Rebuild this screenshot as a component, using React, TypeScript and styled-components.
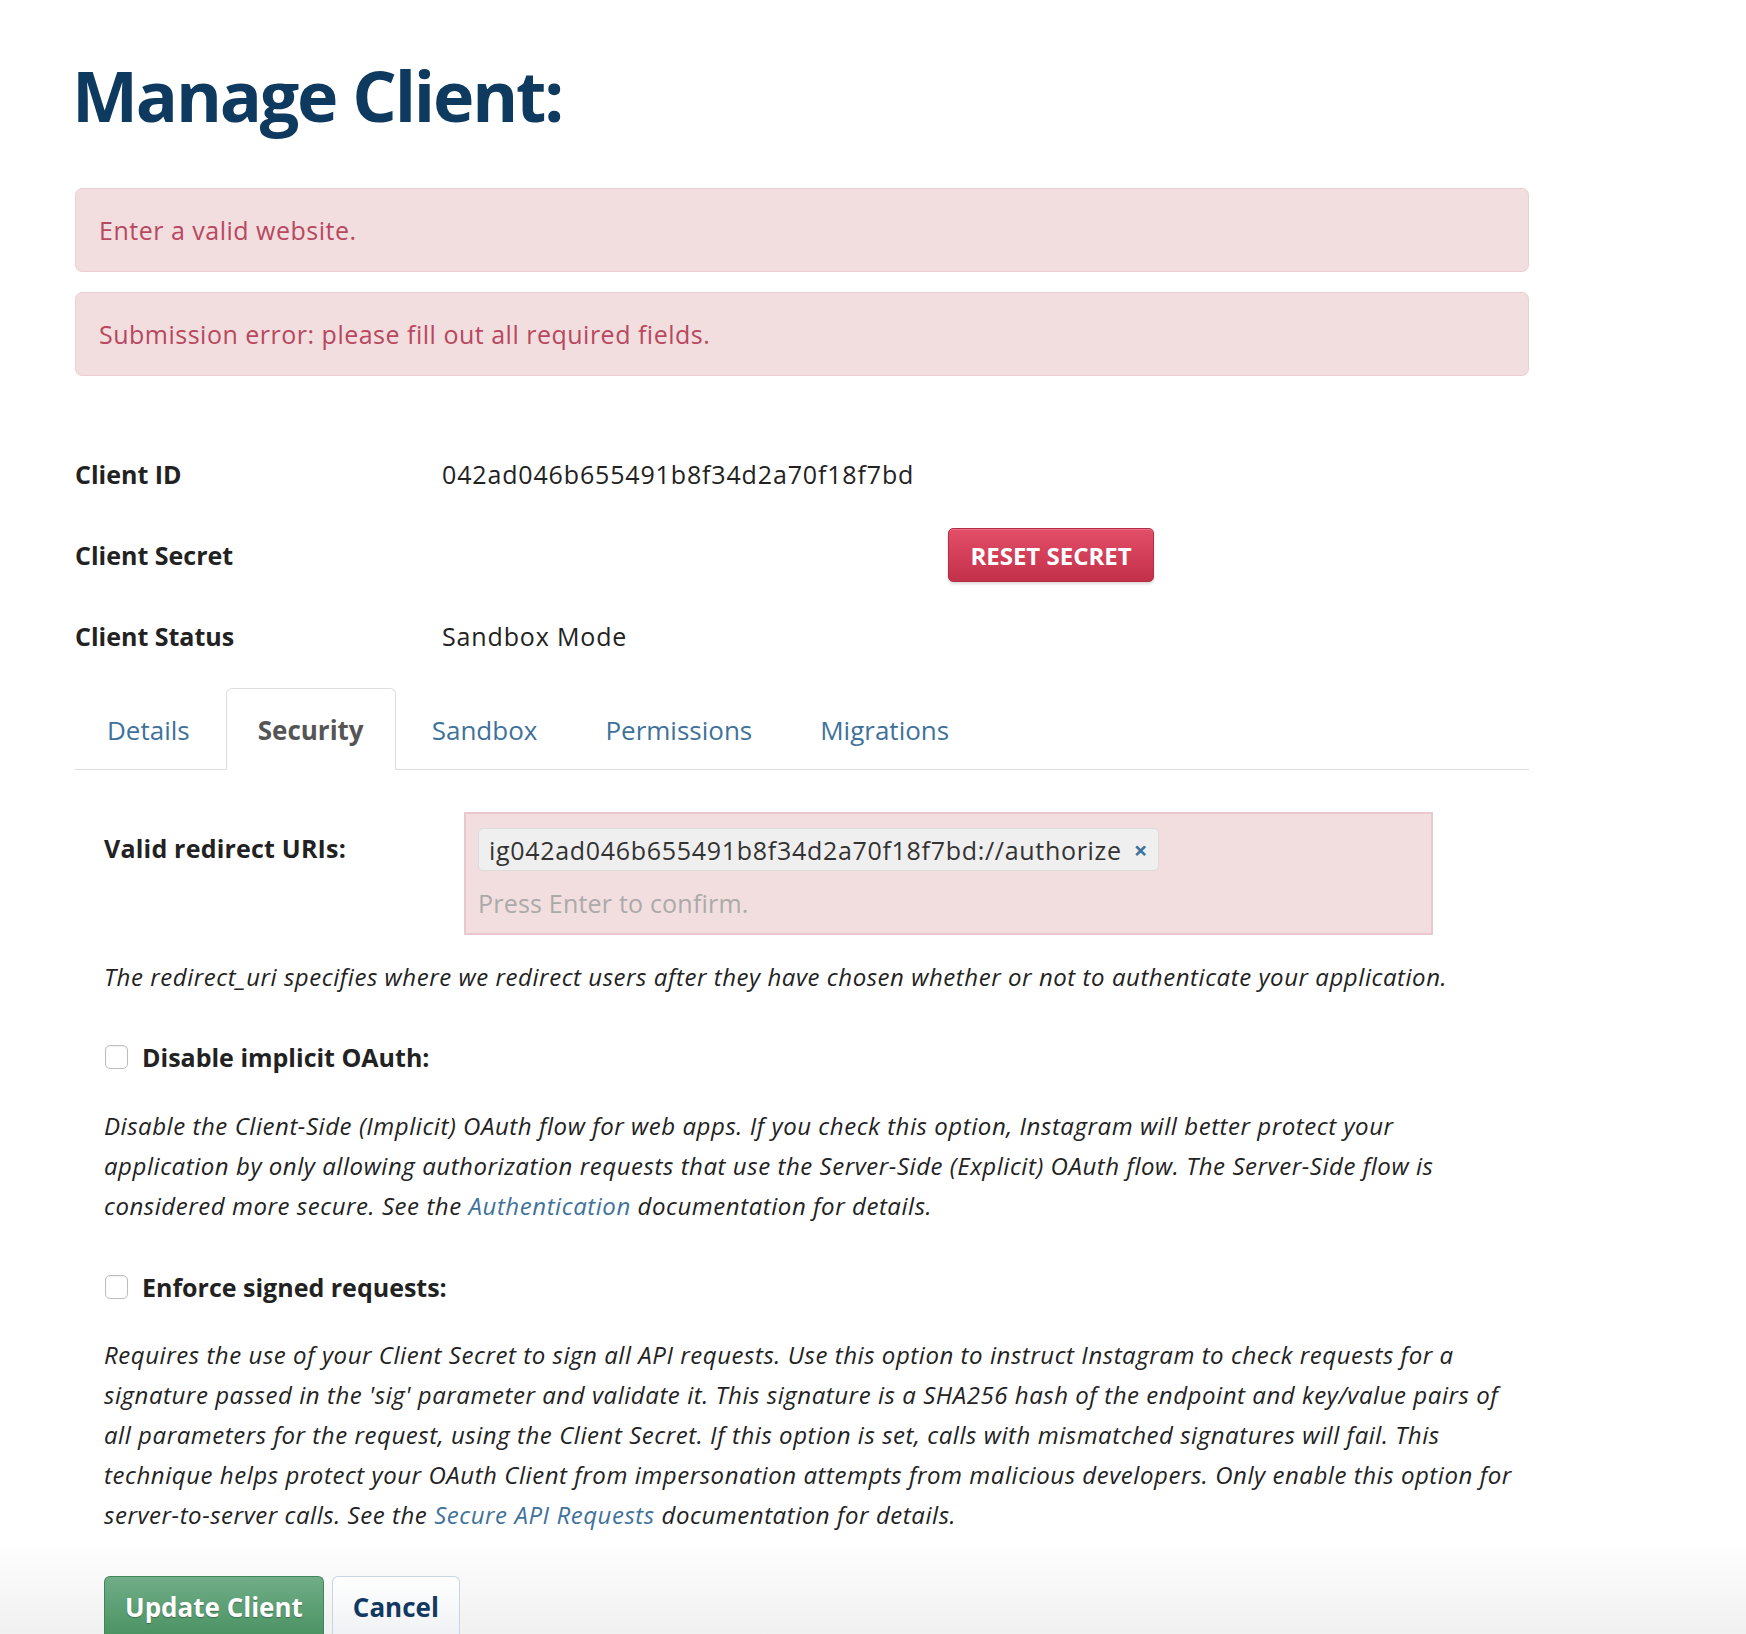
import React from 'react';
import styled, { createGlobalStyle } from 'styled-components';

const FONT = '"Open Sans", "Liberation Sans", sans-serif';
const LINK = '#3f729b';

const GlobalStyle = createGlobalStyle`
  html, body {
    margin: 0;
    padding: 0;
    background: #fff;
  }
  body {
    font-family: ${FONT};
    color: #222;
    -webkit-font-smoothing: antialiased;
  }
  * {
    box-sizing: border-box;
  }
`;

const Page = styled.div`
  width: 1746px;
  min-height: 1634px;
  display: flex;
  flex-direction: column;
`;

const Container = styled.div`
  width: 1454px;
  margin-left: 75px;
`;

const Title = styled.h1`
  margin: 60px 0 58px -3px;
  font-size: 70px;
  line-height: 70px;
  font-weight: 700;
  color: #0f3a60;
  letter-spacing: -2.2px;
`;

const Alert = styled.div`
  background: #f2dede;
  border: 1px solid #ebcfd4;
  border-radius: 7px;
  padding: 24px 23px;
  font-size: 25px;
  line-height: 34px;
  letter-spacing: 0.5px;
  color: #b8475f;

  & + & {
    margin-top: 20px;
  }
`;

const InfoList = styled.div`
  margin-top: 71px;
  display: grid;
  gap: 27px;
`;

const InfoRow = styled.div`
  display: grid;
  grid-template-columns: 367px 1fr;
  align-items: center;
  height: 54px;
`;

const InfoLabel = styled.div`
  font-size: 25px;
  font-weight: 700;
  color: #222;
`;

const InfoValue = styled.div`
  font-size: 25px;
  letter-spacing: 0.85px;
  color: #222;
`;

const ResetButton = styled.button`
  margin-left: 506px;
  width: 206px;
  height: 54px;
  border: 1px solid #b52c45;
  border-radius: 5px;
  background: linear-gradient(#e34e68, #c3304a);
  box-shadow: 0 2px 3px rgba(0, 0, 0, 0.15), inset 0 1px 0 rgba(255, 255, 255, 0.2);
  color: #fff;
  font-family: ${FONT};
  font-size: 24px;
  font-weight: 700;
`;

const Tabs = styled.nav`
  margin-top: 25px;
  display: flex;
  align-items: flex-end;
  gap: 4px;
  height: 82px;
  border-bottom: 1px solid #ddd;
`;

const Tab = styled.a<{ $active?: boolean }>`
  display: flex;
  align-items: center;
  height: ${({ $active }) => ($active ? 82 : 81)}px;
  padding: 2px 31px 0;
  margin-bottom: ${({ $active }) => ($active ? -1 : 0)}px;
  font-size: 26px;
  text-decoration: none;
  color: ${({ $active }) => ($active ? '#555' : LINK)};
  font-weight: ${({ $active }) => ($active ? 700 : 400)};
  background: ${({ $active }) => ($active ? '#fff' : 'transparent')};
  border: 1px solid ${({ $active }) => ($active ? '#ddd' : 'transparent')};
  border-bottom-color: ${({ $active }) => ($active ? '#fff' : 'transparent')};
  border-radius: 6px 6px 0 0;
`;

const Panel = styled.div`
  padding: 42px 29px 0;
`;

const FormRow = styled.div`
  display: grid;
  grid-template-columns: 360px 969px;
  align-items: start;
`;

const FieldLabel = styled.label`
  padding-top: 19px;
  font-size: 25px;
  line-height: 34px;
  letter-spacing: 0.2px;
  font-weight: 700;
  color: #222;
`;

const TagInput = styled.div`
  height: 123px;
  padding: 14px 12px 0;
  background: #f2dede;
  border: 2px solid #ebc8ce;
`;

const Tag = styled.span`
  display: inline-flex;
  align-items: center;
  gap: 12px;
  height: 43px;
  padding: 0 10px;
  background: #efefef;
  border: 1px solid #dcdcdc;
  border-radius: 5px;
  font-size: 25px;
  letter-spacing: 0.7px;
  color: #333;
`;

const TagRemove = styled.span`
  color: ${LINK};
  font-weight: 700;
  font-size: 24px;
  line-height: 1;
`;

const Placeholder = styled.div`
  margin-top: 12px;
  font-size: 25px;
  line-height: 40px;
  letter-spacing: 0.2px;
  color: #aaa;
`;

const Help = styled.p<{ $gap: number }>`
  margin: ${({ $gap }) => $gap}px 0 0;
  font-size: 24px;
  line-height: 40px;
  letter-spacing: 0.55px;
  font-style: italic;
  white-space: nowrap;
  color: #222;
`;

const Link = styled.a`
  color: ${LINK};
  text-decoration: none;
`;

const CheckRow = styled.label<{ $gap: number }>`
  margin-top: ${({ $gap }) => $gap}px;
  display: flex;
  align-items: center;
  gap: 14px;
  height: 40px;
  font-size: 25px;
  font-weight: 700;
  color: #222;
`;

const CheckBox = styled.span`
  width: 23px;
  height: 24px;
  border: 1.5px solid #bdbdbd;
  border-radius: 5px;
  background: #fff;
  box-shadow: inset 0 1px 2px rgba(0, 0, 0, 0.06);
  margin-left: 1px;
`;

const Footer = styled.div`
  flex: 1;
  margin-top: 5px;
  padding: 36px 0 0 104px;
  display: flex;
  gap: 8px;
  background: linear-gradient(#fff, #efefef);
`;

const ActionButton = styled.button<{ $primary?: boolean }>`
  height: 66px;
  padding: 0 20px 6px;
  border-radius: 6px 6px 0 0;
  border: 1px solid ${({ $primary }) => ($primary ? '#3d8657' : '#c6d6e6')};
  border-bottom: none;
  background: ${({ $primary }) =>
    $primary ? 'linear-gradient(#70ad88, #47905f)' : 'linear-gradient(#fff, #edf0f3)'};
  color: ${({ $primary }) => ($primary ? '#fff' : '#12395f')};
  text-shadow: ${({ $primary }) => ($primary ? '0 1px 1px rgba(0,0,0,0.3)' : 'none')};
  font-family: ${FONT};
  font-size: 26px;
  font-weight: 700;
`;

const info = [
  { label: 'Client ID', value: '042ad046b655491b8f34d2a70f18f7bd' },
  { label: 'Client Secret', value: null },
  { label: 'Client Status', value: 'Sandbox Mode' },
];

const tabs = ['Details', 'Security', 'Sandbox', 'Permissions', 'Migrations'];

export default function App() {
  return (
    <Page>
      <GlobalStyle />
      <Container>
        <Title>Manage Client:</Title>

        <Alert>Enter a valid website.</Alert>
        <Alert>Submission error: please fill out all required fields.</Alert>

        <InfoList>
          {info.map((item) => (
            <InfoRow key={item.label}>
              <InfoLabel>{item.label}</InfoLabel>
              {item.value ? (
                <InfoValue>{item.value}</InfoValue>
              ) : (
                <div>
                  <ResetButton>RESET SECRET</ResetButton>
                </div>
              )}
            </InfoRow>
          ))}
        </InfoList>

        <Tabs>
          {tabs.map((tab) => (
            <Tab key={tab} href="#" $active={tab === 'Security'}>
              {tab}
            </Tab>
          ))}
        </Tabs>

        <Panel>
          <FormRow>
            <FieldLabel>Valid redirect URIs:</FieldLabel>
            <TagInput>
              <Tag>
                ig042ad046b655491b8f34d2a70f18f7bd://authorize
                <TagRemove>×</TagRemove>
              </Tag>
              <Placeholder>Press Enter to confirm.</Placeholder>
            </TagInput>
          </FormRow>

          <Help $gap={22}>
            The redirect_uri specifies where we redirect users after they have chosen whether or not to authenticate your application.
          </Help>

          <CheckRow $gap={40}>
            <CheckBox />
            Disable implicit OAuth:
          </CheckRow>
          <Help $gap={29}>
            Disable the Client-Side (Implicit) OAuth flow for web apps. If you check this option, Instagram will better protect your
            <br />
            application by only allowing authorization requests that use the Server-Side (Explicit) OAuth flow. The Server-Side flow is
            <br />
            considered more secure. See the <Link href="#">Authentication</Link> documentation for details.
          </Help>

          <CheckRow $gap={41}>
            <CheckBox />
            Enforce signed requests:
          </CheckRow>
          <Help $gap={28}>
            Requires the use of your Client Secret to sign all API requests. Use this option to instruct Instagram to check requests for a
            <br />
            signature passed in the 'sig' parameter and validate it. This signature is a SHA256 hash of the endpoint and key/value pairs of
            <br />
            all parameters for the request, using the Client Secret. If this option is set, calls with mismatched signatures will fail. This
            <br />
            technique helps protect your OAuth Client from impersonation attempts from malicious developers. Only enable this option for
            <br />
            server-to-server calls. See the <Link href="#">Secure API Requests</Link> documentation for details.
          </Help>
        </Panel>
      </Container>

      <Footer>
        <ActionButton $primary>Update Client</ActionButton>
        <ActionButton>Cancel</ActionButton>
      </Footer>
    </Page>
  );
}
